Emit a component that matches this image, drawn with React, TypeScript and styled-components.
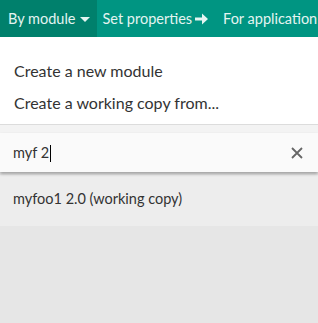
import * as React from 'react';
import styled, { createGlobalStyle } from 'styled-components';

const Global = createGlobalStyle`
    html, body {
        margin: 0;
        padding: 0;
        background: #e6e6e6;
        font-family: Lato, "Noto Sans", sans-serif;
    }
`;

const Page = styled.div`
    width: 318px;
    height: 323px;
    overflow: hidden;
    background: #e6e6e6;
    display: flex;
    flex-direction: column;
`;

const TopBar = styled.nav`
    height: 37px;
    background: #009582;
    display: flex;
    flex-direction: row;
    flex-shrink: 0;
    white-space: nowrap;
`;

const Tab = styled.div<{ $active?: boolean }>`
    display: flex;
    align-items: center;
    gap: 2px;
    padding: 0 ${p => (p.$active ? '7px 0 8px' : '9px 0 5px')};
    background: ${p => (p.$active ? '#00806c' : 'transparent')};
    color: #e4f4f1;
    font-size: 14.5px;
`;

const Caret = styled.span`
    width: 0;
    height: 0;
    border-left: 5px solid transparent;
    border-right: 5px solid transparent;
    border-top: 5px solid #e4f4f1;
    margin-left: 3px;
    margin-top: 1px;
`;

const Menu = styled.div`
    background: #fff;
    border-bottom: 1px solid #dcdcdc;
    padding: 22px 0 1px 0;
    display: flex;
    flex-direction: column;
`;

const MenuItem = styled.div`
    padding: 0 14px;
    height: 32px;
    line-height: 23px;
    font-size: 16px;
    color: #333;
`;

const SearchWrap = styled.div`
    background: #f3f3f3;
    padding-top: 8px;
`;

const SearchBox = styled.div`
    height: 39px;
    background: #fafafa;
    display: flex;
    align-items: center;
    padding: 0 15px 0 13px;
    box-shadow: 0 2px 3px rgba(0, 0, 0, 0.3);
    position: relative;
    z-index: 1;
`;

const SearchText = styled.span`
    flex: 1;
    font-size: 14.5px;
    color: #333;
`;

const Cursor = styled.span`
    display: inline-block;
    width: 1px;
    height: 17px;
    background: #000;
    vertical-align: -4px;
    margin-left: 1px;
`;

const ResultRow = styled.div`
    background: #ededed;
    height: 47px;
    margin-top: 3px;
    display: flex;
    align-items: center;
    padding: 0 13px 4px;
    font-size: 14.5px;
    color: #333;
`;

function App() {
    return (
        <Page>
            <Global />
            <TopBar>
                <Tab $active>
                    By module <Caret />
                </Tab>
                <Tab>
                    Set properties
                    <svg width="15" height="14" viewBox="0 0 15 14">
                        <path d="M1 5.5h7V1.5L14 7l-6 5.5V8.5H1z" fill="#e4f4f1" />
                    </svg>
                </Tab>
                <Tab>For application</Tab>
            </TopBar>
            <Menu>
                <MenuItem>Create a new module</MenuItem>
                <MenuItem>Create a working copy from...</MenuItem>
            </Menu>
            <SearchWrap>
                <SearchBox>
                    <SearchText>
                        myf 2<Cursor />
                    </SearchText>
                    <svg width="12" height="12" viewBox="0 0 12 12">
                        <path d="M1 1l10 10M11 1L1 11" stroke="#666" strokeWidth="1.8" />
                    </svg>
                </SearchBox>
            </SearchWrap>
            <ResultRow>myfoo1 2.0 (working copy)</ResultRow>
        </Page>
    );
}

export default App;
